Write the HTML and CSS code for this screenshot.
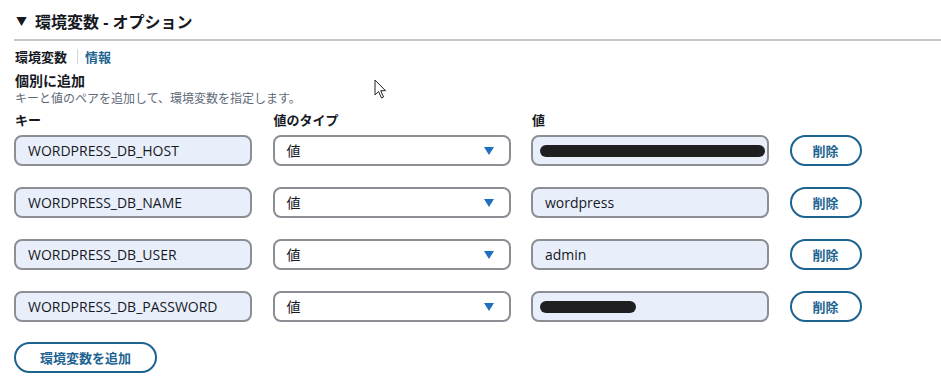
FILE: index.html
```html
<!DOCTYPE html>
<html lang="ja">
<head>
    <meta charset="UTF-8">
    <title>環境変数</title>
    <link rel="stylesheet" href="styles.css">
</head>
<body>
    <div class="panel">
        <h2 class="section-title"><span class="caret">&#9660;</span>環境変数 - オプション</h2>

        <div class="heading-line">
            <span class="heading">環境変数</span>
            <span class="divider"></span>
            <a class="info" href="#">情報</a>
        </div>

        <div class="sub-title">個別に追加</div>
        <div class="desc">キーと値のペアを追加して、環境変数を指定します。</div>

        <div class="grid labels">
            <div>キー</div>
            <div>値のタイプ</div>
            <div>値</div>
            <div></div>
        </div>

        <div class="rows">
            <div class="grid">
                <div class="field">WORDPRESS_DB_HOST</div>
                <div class="field select">値<span class="arrow"></span></div>
                <div class="field"><span class="mask mask-long"></span></div>
                <button class="btn">削除</button>
            </div>
            <div class="grid">
                <div class="field">WORDPRESS_DB_NAME</div>
                <div class="field select">値<span class="arrow"></span></div>
                <div class="field">wordpress</div>
                <button class="btn">削除</button>
            </div>
            <div class="grid">
                <div class="field">WORDPRESS_DB_USER</div>
                <div class="field select">値<span class="arrow"></span></div>
                <div class="field">admin</div>
                <button class="btn">削除</button>
            </div>
            <div class="grid">
                <div class="field">WORDPRESS_DB_PASSWORD</div>
                <div class="field select">値<span class="arrow"></span></div>
                <div class="field"><span class="mask mask-short"></span></div>
                <button class="btn">削除</button>
            </div>
        </div>

        <button class="btn btn-add">環境変数を追加</button>

        <svg class="cursor" width="14" height="20" viewBox="0 0 14 20">
            <path d="M1 1 L1 16 L4.5 12.5 L7.5 19 L9.5 18 L6.7 11.7 L11.5 11.7 Z" fill="#fff" stroke="#222" stroke-width="1"/>
        </svg>
    </div>
</body>
</html>
```

FILE: styles.css
```css
*{margin: 0;padding: 0;box-sizing: border-box;}
body{font-family: "Open Sans", "Noto Sans CJK JP", sans-serif;color: #16191f;background: #fff;}

.panel{position: relative;padding: 12px 0 0 14px;}

.section-title{font-size: 16px;font-weight: bold;line-height: 20px;padding: 0 0 5px 2px;border-bottom: 2px solid #c6c6cd;}
.caret{font-size: 11px;margin-right: 8px;position: relative;top: -2px;}

.heading-line{display: flex;align-items: center;margin-top: 7px;height: 16px;padding-left: 1px;}
.heading{font-size: 13px;font-weight: bold;}
.divider{width: 1px;height: 15px;background: #d1d5db;margin: 0 7px 0 10px;}
.info{font-size: 13px;font-weight: bold;color: #1d6391;text-decoration: none;}

.sub-title{font-size: 14px;font-weight: bold;line-height: 18px;margin-top: 8px;padding-left: 1px;}
.desc{font-size: 12px;color: #5f6b7a;line-height: 18px;padding-left: 1px;}

.grid{display: grid;grid-template-columns: 238px 238px 238px 72px;column-gap: 20.5px;align-items: center;}
.labels{font-size: 13px;font-weight: bold;line-height: 16px;margin: 4px 0 7px;padding-left: 1px;}

.rows{display: flex;flex-direction: column;gap: 21px;}

.field{height: 31px;border: 2px solid #8d8d96;border-radius: 8px;background: #e9effa;font-size: 14px;line-height: 27px;padding-left: 12px;position: relative;display: flex;align-items: center;}
.select{background: #fff;}
.arrow{position: absolute;right: 15px;top: 10px;width: 0;height: 0;border-left: 5.5px solid transparent;border-right: 5.5px solid transparent;border-top: 8px solid #1f6fbf;}

.mask{display: block;height: 12px;border-radius: 6px;background: #1f1f21;margin-left: -5px;}
.mask-long{width: 225px;}
.mask-short{width: 96px;}

.btn{height: 31px;border: 2px solid #1d6391;border-radius: 16px;background: #fff;color: #1d6391;font-family: "Noto Sans CJK JP", sans-serif;font-size: 13px;font-weight: bold;}
.btn-add{width: 143px;margin-top: 20px;}

.cursor{position: absolute;left: 374px;top: 79px;}
```
